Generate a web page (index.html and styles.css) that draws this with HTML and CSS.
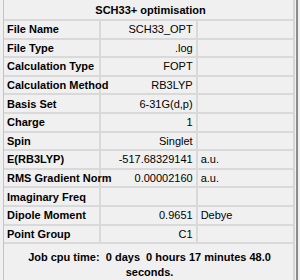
FILE: index.html
```html
<!DOCTYPE html>
<html>
<head>
<meta charset="utf-8">
<link rel="stylesheet" href="styles.css">
</head>
<body>
<div class="frame">
  <div class="panel">
    <table class="props">
      <tr class="title-row"><th colspan="3">SCH33+ optimisation</th></tr>
      <tr><td class="label">File Name</td><td class="val">SCH33_OPT</td><td class="unit"></td></tr>
      <tr><td class="label">File Type</td><td class="val">.log</td><td class="unit"></td></tr>
      <tr><td class="label">Calculation Type</td><td class="val">FOPT</td><td class="unit"></td></tr>
      <tr><td class="label">Calculation Method</td><td class="val">RB3LYP</td><td class="unit"></td></tr>
      <tr><td class="label">Basis Set</td><td class="val">6-31G(d,p)</td><td class="unit"></td></tr>
      <tr><td class="label">Charge</td><td class="val">1</td><td class="unit"></td></tr>
      <tr><td class="label">Spin</td><td class="val">Singlet</td><td class="unit"></td></tr>
      <tr><td class="label">E(RB3LYP)</td><td class="val">-517.68329141</td><td class="unit">a.u.</td></tr>
      <tr><td class="label">RMS Gradient Norm</td><td class="val">0.00002160</td><td class="unit">a.u.</td></tr>
      <tr><td class="label">Imaginary Freq</td><td class="val"></td><td class="unit"></td></tr>
      <tr><td class="label">Dipole Moment</td><td class="val">0.9651</td><td class="unit">Debye</td></tr>
      <tr><td class="label">Point Group</td><td class="val">C1</td><td class="unit"></td></tr>
    </table>
    <div class="footer">Job cpu time:&nbsp; 0 days&nbsp; 0 hours 17 minutes 48.0 seconds.</div>
  </div>
</div>
</body>
</html>
```
FILE: styles.css
```css
html, body {
  margin: 0;
  padding: 0;
  background: #f0f0f0;
}
body {
  width: 300px;
  height: 280px;
  overflow: hidden;
  font-family: "Liberation Sans", Arial, sans-serif;
  font-size: 11px;
  color: #000;
}
.frame {
  margin-left: 3px;
  width: 292px;
  height: 280px;
  border-right: 2px solid #8c8c8c;
  padding-right: 1px;
}
.panel {
  height: 280px;
  border-left: 1px solid #c4c4c4;
  border-right: 2px solid #d6d6d6;
  box-sizing: border-box;
}
.props {
  width: 100%;
  border-collapse: collapse;
  table-layout: fixed;
}
.props th {
  height: 19px;
  padding: 0;
  font-weight: bold;
  text-align: center;
  border-bottom: 2px solid #d9d9d9;
  padding-left: 4px;
}
.props td {
  height: 16.6px;
  padding: 0;
  border-bottom: 2px solid #d9d9d9;
  white-space: nowrap;
}
.props td.label {
  width: 130px;
  padding-left: 3px;
  font-weight: bold;
  border-right: 2px solid #d9d9d9;
}
.props td.val {
  width: 90px;
  text-align: right;
  padding-right: 3px;
  border-right: 2px solid #d9d9d9;
}
.props td.unit {
  padding-left: 3px;
}
.footer {
  padding: 6px 20px 0 22px;
  text-align: center;
  font-weight: bold;
  line-height: 15px;
}
```
